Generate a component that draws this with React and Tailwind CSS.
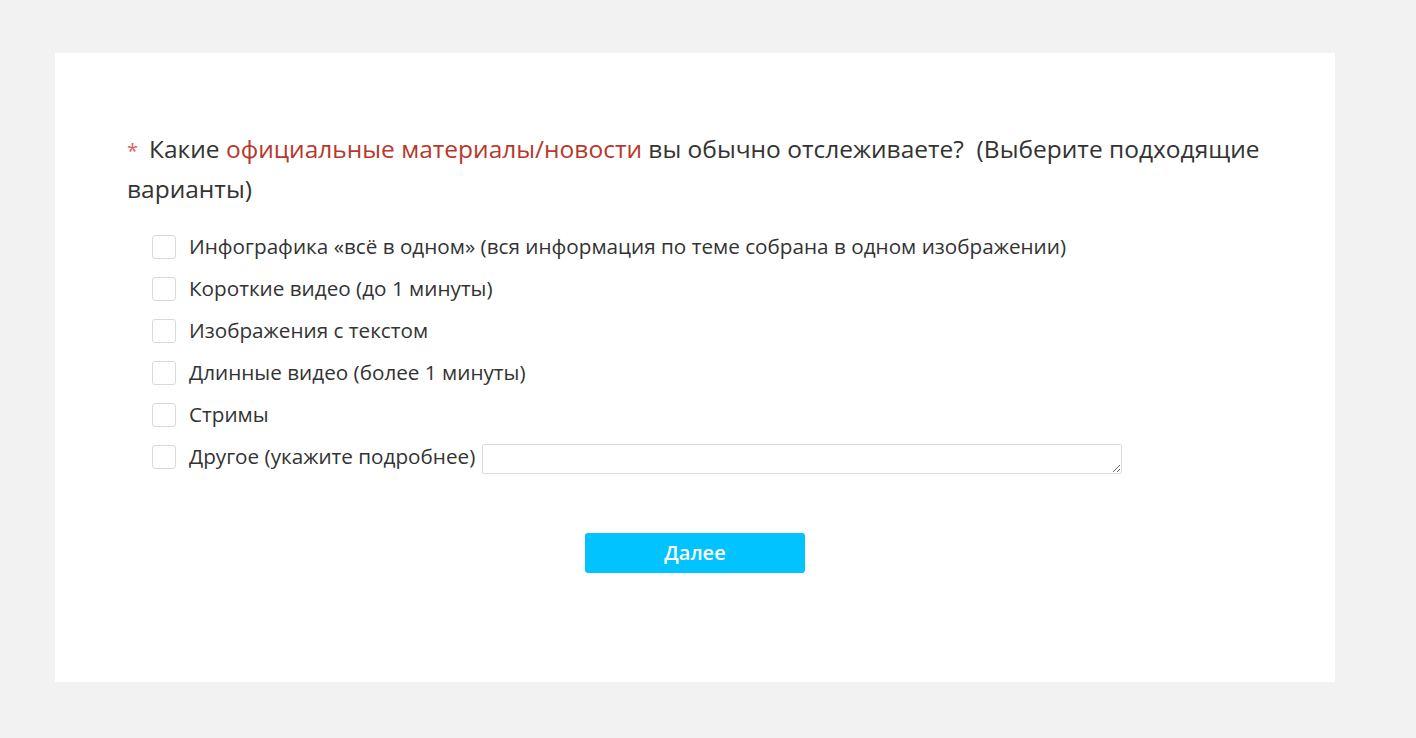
import React, { useState } from "react";

const options = [
  "Инфографика «всё в одном» (вся информация по теме собрана в одном изображении)",
  "Короткие видео (до 1 минуты)",
  "Изображения с текстом",
  "Длинные видео (более 1 минуты)",
  "Стримы",
];

const Checkbox = ({ checked, onChange }) => (
  <button
    type="button"
    onClick={onChange}
    className={`h-[24px] w-[24px] shrink-0 rounded-[3px] border ${
      checked ? "border-[#00c3ff] bg-[#00c3ff]" : "border-[#d9d9d9] bg-white"
    }`}
  />
);

const App = () => {
  const [selected, setSelected] = useState({});
  const [other, setOther] = useState("");

  const toggle = (key) => setSelected((s) => ({ ...s, [key]: !s[key] }));

  return (
    <div
      className="min-h-[738px] bg-[#f2f2f2] pt-[53px] pl-[55px]"
      style={{ fontFamily: '"Open Sans", "Noto Sans", sans-serif' }}
    >
      <div className="h-[629px] w-[1280px] bg-white px-[72px] pt-[77px]">
        <h2 className="text-[24.5px] leading-[38px] text-[#333]">
          <span className="mr-[11px] text-[20px] text-[#e0605a]">*</span>
          Какие <span className="text-[#b7382c]">официальные материалы/новости</span> вы
          обычно отслеживаете?&nbsp; (Выберите подходящие варианты)
        </h2>

        <div className="mt-[27px] flex flex-col gap-[18px] pl-[25px]">
          {options.map((label) => (
            <label key={label} className="flex h-[24px] cursor-pointer items-center">
              <Checkbox checked={!!selected[label]} onChange={() => toggle(label)} />
              <span className="ml-[13px] text-[20.7px] text-[#333]">{label}</span>
            </label>
          ))}
          <div className="flex h-[24px] items-center">
            <Checkbox checked={!!selected.other} onChange={() => toggle("other")} />
            <span className="ml-[13px] text-[20.7px] text-[#333]">Другое (укажите подробнее)</span>
            <textarea
              value={other}
              onChange={(e) => setOther(e.target.value)}
              className="ml-[7px] mt-[3px] h-[30px] w-[640px] rounded-[2px] border border-[#dcdcdc] px-2 text-[15px] focus:outline-none"
            />
          </div>
        </div>

        <div className="mt-[64px] flex justify-center">
          <button
            type="button"
            className="h-[40px] w-[220px] rounded-[3px] bg-[#00c3ff] text-[20px] font-semibold text-white"
          >
            Далее
          </button>
        </div>
      </div>
    </div>
  );
};

export default App;
